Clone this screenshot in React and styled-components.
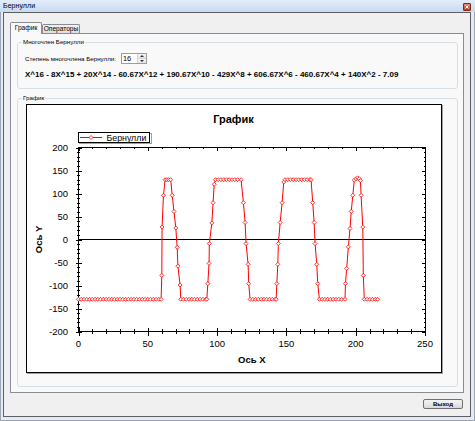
import React from 'react';
import styled, { createGlobalStyle } from 'styled-components';

const GlobalStyle = createGlobalStyle`
  html, body {
    margin: 0;
    padding: 0;
    background: #f0f0f0;
  }
  body {
    font-family: "Liberation Sans", Arial, sans-serif;
  }
`;

const Window = styled.div`
  box-sizing: border-box;
  width: 475px;
  height: 421px;
  display: flex;
  flex-direction: column;
  background: #e4ebf4;
  box-shadow: inset 1px 0 0 #9aa6b4, inset -1px -1px 0 #9aa6b4;
`;

const TitleBar = styled.div`
  height: 12px;
  flex: none;
  display: flex;
  justify-content: space-between;
  padding: 0 4px 0 3px;
  background: linear-gradient(to bottom, #e3edfa, #c6daf2);
`;

const Caption = styled.span`
  font-size: 7.1px;
  line-height: 12px;
  color: #000;
`;

const CloseButton = styled.div`
  box-sizing: border-box;
  width: 8px;
  height: 8px;
  margin-top: 3px;
  display: flex;
  align-items: center;
  justify-content: center;
  border: 1px solid #7c2a19;
  border-radius: 1px;
  background: linear-gradient(to bottom, #e28a72, #c43b1f);
`;

const Client = styled.div`
  flex: 1;
  display: flex;
  flex-direction: column;
  margin: 0 4px 4px 3px;
  padding: 9px 6px 7px 6px;
  border: 1px solid #5f5f5f;
  background: #f0f0f0;
`;

const TabStrip = styled.div`
  height: 11px;
  flex: none;
  display: flex;
  align-items: flex-end;
`;

const Tab = styled.div`
  box-sizing: border-box;
  position: relative;
  z-index: 1;
  height: ${(p) => (p.$active ? 12 : 9)}px;
  margin-bottom: ${(p) => (p.$active ? -1 : 0)}px;
  width: ${(p) => p.$w}px;
  border: 1px solid #898c95;
  border-bottom: none;
  border-radius: 2px 2px 0 0;
  background: ${(p) =>
    p.$active ? '#f9f9f9' : 'linear-gradient(to bottom, #f2f2f2, #dedede)'};
  font-size: 6.6px;
  line-height: ${(p) => (p.$active ? 10 : 8)}px;
  text-align: center;
  color: #000;
`;

const TabPanel = styled.div`
  flex: 1;
  min-height: 0;
  display: flex;
  flex-direction: column;
  padding: 0 5px 0 6px;
  border: 1px solid #898c95;
  background: #f9f9f9;
`;

const GroupBox = styled.div`
  box-sizing: border-box;
  height: ${(p) => p.$h}px;
  margin-top: ${(p) => p.$mt}px;
  display: flex;
  flex-direction: column;
  align-items: flex-start;
  padding: 0 7px 0 ${(p) => p.$pl}px;
  border: 1px solid #d5dfe5;
  border-radius: 3px;
`;

const GroupTitle = styled.span`
  margin: -5px 0 ${(p) => p.$mb}px ${(p) => 4 - p.$pl}px;
  padding: 0 1px;
  background: #f9f9f9;
  font-size: 6.2px;
  line-height: 8px;
  color: #000;
`;

const Row = styled.div`
  display: flex;
  align-items: center;
  gap: 5px;
  height: 11px;
`;

const Label = styled.span`
  font-size: 6.2px;
  color: #000;
`;

const SpinBox = styled.div`
  box-sizing: border-box;
  width: 26px;
  height: 11px;
  display: flex;
  border: 1px solid #9a9da5;
  background: #fff;
`;

const SpinValue = styled.span`
  flex: 1;
  padding-left: 1px;
  font-size: 7.4px;
  line-height: 9px;
  color: #000;
`;

const SpinButtons = styled.div`
  width: 8px;
  display: flex;
  flex-direction: column;
  border-left: 1px solid #d6d6d6;
`;

const SpinHalf = styled.div`
  flex: 1;
  display: flex;
  align-items: center;
  justify-content: center;
  background: linear-gradient(to bottom, #f6f6f6, #e4e4e4);
  border-bottom: ${(p) => (p.$top ? '1px solid #d6d6d6' : 'none')};
`;

const Arrow = styled.div`
  width: 0;
  height: 0;
  border-left: 2px solid transparent;
  border-right: 2px solid transparent;
  ${(p) => (p.$up ? 'border-bottom' : 'border-top')}: 2px solid #333;
`;

const Polynomial = styled.div`
  margin-top: 6px;
  font-size: 8px;
  font-weight: bold;
  line-height: 10px;
  white-space: nowrap;
  color: #000;
`;

const ChartBox = styled.div`
  box-sizing: border-box;
  width: 416px;
  height: 269px;
  border: 1px solid #000;
  background: #fff;
  box-shadow: 1px 1px 0 #a0a0a0;

  svg {
    display: block;
  }
`;

const Footer = styled.div`
  display: flex;
  justify-content: flex-end;
  padding: 6px 1px 0 0;
`;

const Button = styled.div`
  box-sizing: border-box;
  width: 40px;
  height: 10px;
  border: 1px solid #707070;
  border-radius: 2px;
  background: linear-gradient(to bottom, #f4f4f4 0%, #e8e8e8 50%, #d8d8d8 100%);
  font-size: 6px;
  font-weight: bold;
  line-height: 8px;
  text-align: center;
  color: #000;
`;

// plot geometry, in the chart's own coordinates
const X0 = 78.5;
const X1 = 425;
const Y0 = 147.5;
const Y1 = 331.5;
const sx = (v) => X0 + (v * (X1 - X0)) / 250;
const sy = (v) => (Y0 + Y1) / 2 - (v * (Y1 - Y0)) / 400;

function flat(y, a, b, step = 2) {
  const out = [];
  for (let x = a; x < b - 0.6; x += step) out.push([x, y]);
  out.push([b, y]);
  return out;
}

const points = [
  ...flat(-130, 0, 59.6),
  [60.1, -78], [60.3, 27], [61.3, 96], [62.5, 130],
  ...flat(130, 63.8, 66.5, 1.3),
  [67.6, 96], [68.9, 61], [70.2, 25], [71.2, -17], [71.7, -58], [73.3, -99],
  ...flat(-130, 73.8, 92.6),
  [93.3, -96], [94.2, -52], [94.4, -9], [96.2, 36], [97.1, 80], [97.9, 120],
  ...flat(130, 98.8, 117.3),
  [119, 80], [120.2, 37], [120.9, -9], [122.4, -54], [122.8, -96],
  ...flat(-130, 123.8, 142.6),
  [143.1, -96], [143.8, -54], [144.2, -9], [145.5, 37], [146.9, 80], [148.1, 125],
  ...flat(130, 149, 167.8),
  [169, 80], [170, 37], [170.7, -9], [171.9, -54], [172.6, -96],
  ...flat(-130, 173.8, 192.3),
  [192.6, -96], [193.5, -63], [194.7, -16], [195.9, 24], [196.8, 61], [197.9, 96], [199, 129],
  [200.2, 132], [201.4, 134], [202.6, 132], [203.4, 128],
  [203.9, 96], [205.1, 27], [205.5, -78],
  ...flat(-130, 206.2, 215.8),
];

const diamond = (x, y, r = 2) =>
  `M${x} ${y - r}L${x + r} ${y}L${x} ${y + r}L${x - r} ${y}Z`;

const xTicks = Array.from({ length: 26 }, (_, i) => i * 10);
const yTicks = Array.from({ length: 41 }, (_, i) => -200 + i * 10);
const tickFont = '"Liberation Sans", Arial, sans-serif';

function BernoulliChart() {
  const line = points.map(([x, y]) => `${sx(x)},${sy(y)}`).join(' ');
  return (
    <svg width="414" height="267" viewBox="27 105 414 267" fontFamily={tickFont}>
      <text x="233.5" y="118.5" fontSize="11" fontWeight="bold" textAnchor="middle" dominantBaseline="central">
        График
      </text>

      <g shapeRendering="crispEdges" stroke="#000" strokeWidth="1">
        <rect x="79" y="133" width="72" height="10" fill="none" stroke="#a0a0a0" />
        <rect x="78.5" y="132.5" width="71" height="10" fill="#fff" />
      </g>
      <line x1="80" y1="137.5" x2="102" y2="137.5" stroke="#f00" strokeWidth="1" />
      <path d={diamond(91, 137.5)} fill="#fff" stroke="#f00" strokeWidth="0.8" />
      <text x="106.5" y="137.8" fontSize="8.8" dominantBaseline="central">
        Бернулли
      </text>

      <g shapeRendering="crispEdges" stroke="#000" strokeWidth="1">
        <rect x={X0} y={Y0} width={X1 - X0} height={Y1 - Y0} fill="none" />
        <line x1={X0} y1={sy(0)} x2={X1} y2={sy(0)} />
        {xTicks.map((v) => {
          const major = v % 50 === 0;
          const x = Math.round(sx(v)) + 0.5;
          return (
            <g key={`x${v}`}>
              <line x1={x} y1={Y1 - (major ? 4 : 2.5)} x2={x} y2={Y1 + (major ? 4 : 2.5)} />
              <line x1={x} y1={Y0} x2={x} y2={Y0 + (major ? 3 : 1.5)} />
            </g>
          );
        })}
        {yTicks.map((v) => {
          const major = v % 50 === 0;
          const y = Math.round(sy(v)) + 0.5;
          return (
            <g key={`y${v}`}>
              <line x1={X0 - (major ? 3 : 1.5)} y1={y} x2={X0 + (major ? 3 : 1.5)} y2={y} />
              <line x1={X1 - (major ? 3 : 1.5)} y1={y} x2={X1} y2={y} />
            </g>
          );
        })}
      </g>

      {yTicks
        .filter((v) => v % 50 === 0)
        .map((v) => (
          <text key={`yl${v}`} x="68" y={sy(v) + 0.3} fontSize="9.5" textAnchor="end" dominantBaseline="central">
            {v}
          </text>
        ))}
      {xTicks
        .filter((v) => v % 50 === 0)
        .map((v) => (
          <text key={`xl${v}`} x={sx(v)} y="343.5" fontSize="9.5" textAnchor="middle" dominantBaseline="central">
            {v}
          </text>
        ))}

      <text x={(X0 + X1) / 2} y="359.5" fontSize="9.5" fontWeight="bold" textAnchor="middle" dominantBaseline="central">
        Ось X
      </text>
      <text
        x="0"
        y="0"
        fontSize="9.5"
        fontWeight="bold"
        textAnchor="middle"
        dominantBaseline="central"
        transform={`translate(38.8 ${(Y0 + Y1) / 2}) rotate(-90)`}
      >
        Ось Y
      </text>

      <polyline points={line} fill="none" stroke="#f00" strokeWidth="1" />
      {points.map(([x, y], i) => (
        <path key={i} d={diamond(sx(x), sy(y))} fill="#fff" stroke="#f00" strokeWidth="0.8" />
      ))}
    </svg>
  );
}

const polynomial =
  'X^16 - 8X^15 + 20X^14 - 60.67X^12 + 190.67X^10 - 429X^8 + 606.67X^6 - 460.67X^4 + 140X^2 - 7.09';

export default function App() {
  return (
    <>
      <GlobalStyle />
      <Window>
        <TitleBar>
          <Caption>Бернулли</Caption>
          <CloseButton>
            <svg width="4" height="4" viewBox="0 0 4 4">
              <path d="M0.5 0.5L3.5 3.5M3.5 0.5L0.5 3.5" stroke="#fff" strokeWidth="1" />
            </svg>
          </CloseButton>
        </TitleBar>
        <Client>
          <TabStrip>
            <Tab $active $w={32}>График</Tab>
            <Tab $w={38}>Операторы</Tab>
          </TabStrip>
          <TabPanel>
            <GroupBox $mt={8} $h={47} $pl={7}>
              <GroupTitle $pl={7} $mb={7}>Многочлен Бернулли</GroupTitle>
              <Row>
                <Label>Степень многочлена Бернулли:</Label>
                <SpinBox>
                  <SpinValue>16</SpinValue>
                  <SpinButtons>
                    <SpinHalf $top>
                      <Arrow $up />
                    </SpinHalf>
                    <SpinHalf>
                      <Arrow />
                    </SpinHalf>
                  </SpinButtons>
                </SpinBox>
              </Row>
              <Polynomial>{polynomial}</Polynomial>
            </GroupBox>
            <GroupBox $mt={9} $h={289} $pl={8}>
              <GroupTitle $pl={8} $mb={2}>График</GroupTitle>
              <ChartBox>
                <BernoulliChart />
              </ChartBox>
            </GroupBox>
          </TabPanel>
          <Footer>
            <Button>Выход</Button>
          </Footer>
        </Client>
      </Window>
    </>
  );
}
